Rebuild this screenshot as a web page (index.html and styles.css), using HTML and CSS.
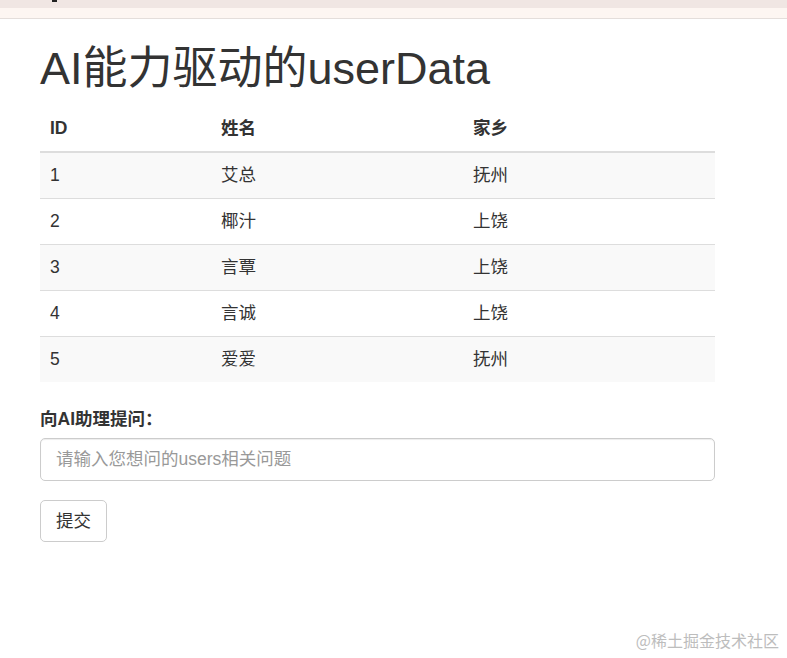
FILE: index.html
```html
<!DOCTYPE html>
<html lang="zh-CN">
<head>
<meta charset="utf-8">
<title>AI能力驱动的userData</title>
<link rel="stylesheet" href="styles.css">
</head>
<body>
<div class="topbar">
  <div class="topbar-upper"><span class="topbar-mark"></span></div>
  <div class="topbar-lower"></div>
</div>
<div class="container">
  <h1 class="title">AI能力驱动的userData</h1>
  <table class="table">
    <thead>
      <tr><th class="col-id">ID</th><th class="col-name">姓名</th><th>家乡</th></tr>
    </thead>
    <tbody>
      <tr><td>1</td><td>艾总</td><td>抚州</td></tr>
      <tr><td>2</td><td>椰汁</td><td>上饶</td></tr>
      <tr><td>3</td><td>言覃</td><td>上饶</td></tr>
      <tr><td>4</td><td>言诚</td><td>上饶</td></tr>
      <tr><td>5</td><td>爱爱</td><td>抚州</td></tr>
    </tbody>
  </table>
  <form class="ask-form">
    <div class="form-group">
      <label class="form-label" for="q">向AI助理提问：</label>
      <input class="form-control" id="q" type="text" placeholder="请输入您想问的users相关问题">
    </div>
    <button class="btn" type="button">提交</button>
  </form>
</div>
<div class="watermark">@稀土掘金技术社区</div>
</body>
</html>
```
FILE: styles.css
```css
html, body {
  margin: 0;
  padding: 0;
  background: #fff;
}
body {
  font-family: "Liberation Sans", Arial, "Noto Sans CJK SC", sans-serif;
  font-size: 17.5px;
  line-height: 1.42857;
  color: #333;
  position: relative;
  min-height: 658px;
}
.topbar-upper {
  height: 8px;
  background: #f0e6e3;
  position: relative;
}
.topbar-mark {
  position: absolute;
  left: 52px;
  top: 0;
  width: 5px;
  height: 2px;
  background: #222;
}
.topbar-lower {
  height: 11px;
  background: #fdf6f2;
  border-bottom: 1px solid #e4dedb;
  box-sizing: border-box;
}
.container {
  padding-left: 40px;
  width: 675px;
}
.title {
  font-size: 45px;
  font-weight: 400;
  line-height: 1.1;
  margin: 25px 0 12.5px;
  color: #333;
}
.table {
  width: 100%;
  border-collapse: collapse;
  border-spacing: 0;
  margin-bottom: 25px;
}
.table th, .table td {
  padding: 10px;
  line-height: 25px;
  text-align: left;
  vertical-align: top;
}
.table th {
  font-weight: 700;
  border-bottom: 2.5px solid #ddd;
}
.table td {
  border-top: 1px solid #ddd;
}
.table tbody tr:first-child td {
  border-top: 0;
}
.table tbody tr:nth-child(odd) {
  background: #f9f9f9;
}
.col-id { width: 151px; }
.col-name { width: 232px; }
.form-group {
  margin-bottom: 19px;
}
.form-label {
  display: block;
  font-weight: 700;
  margin-bottom: 6px;
  line-height: 25px;
}
.form-control {
  display: block;
  width: 100%;
  box-sizing: border-box;
  height: 43px;
  padding: 7.5px 15px;
  font-family: inherit;
  font-size: 17.5px;
  color: #555;
  border: 1px solid #ccc;
  border-radius: 5px;
  box-shadow: inset 0 1px 1px rgba(0,0,0,0.075);
  background: #fff;
}
.form-control::placeholder {
  color: #999;
}
.btn {
  display: inline-block;
  height: 42px;
  padding: 7.5px 15px;
  font-family: inherit;
  font-size: 17.5px;
  line-height: 25px;
  color: #333;
  background: #fff;
  border: 1px solid #ccc;
  border-radius: 5px;
  box-sizing: border-box;
}
.watermark {
  position: absolute;
  right: 8px;
  bottom: 6px;
  font-size: 16px;
  color: #bdbdbd;
  font-family: "Noto Sans CJK SC", sans-serif;
}
```
